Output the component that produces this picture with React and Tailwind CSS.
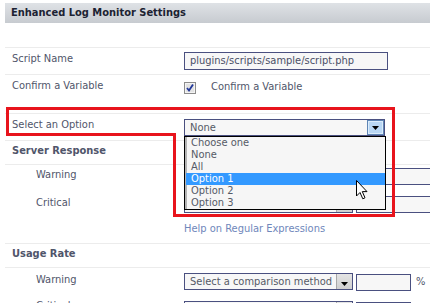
import React from "react";

function Arrow() {
  return (
    <svg width="7" height="4" viewBox="0 0 7 4" className="block">
      <path d="M0 0 H7 L3.5 4 Z" fill="#000" />
    </svg>
  );
}

function Select({ text, w = "w-[169px]", hover = false }) {
  return (
    <div className={`flex h-[17px] ${w} shrink-0 border border-[#4a5080] bg-[#f7f7f7]`}>
      <div className="flex-1 pl-[5px] leading-[15px] text-[#555a66] whitespace-nowrap overflow-hidden">{text}</div>
      {hover ? (
        <div className="flex h-full w-[17px] items-end justify-center border border-[#5f86b5] bg-[#b9d7f4] pb-[4px] shadow-[inset_0_0_0_1px_#dcecfb]">
          <Arrow />
        </div>
      ) : (
        <div className="flex h-full w-[16px] items-end justify-center border-l border-[#a8a8a8] bg-gradient-to-b from-[#e4e4e4] to-[#cfcfcf] pb-[3px]">
          <Arrow />
        </div>
      )}
    </div>
  );
}

function Input({ w }) {
  return <div className={`h-[17px] ${w} shrink-0 border border-[#4a5080] bg-[#f7f7f7]`} />;
}

export default function App() {
  const opts = ["Choose one", "None", "All", "Option 1", "Option 2", "Option 3"];
  return (
    <div className="relative h-[303px] w-[430px] overflow-hidden bg-white font-['DejaVu_Sans_Condensed','DejaVu_Sans',sans-serif] text-[11px] text-[#50556a]">
      <div className="ml-[5px] pt-[3px]">
        <div className="flex h-[20px] items-center bg-gradient-to-b from-[#dfe2e6] to-[#c7cbd0] pl-[6px] font-bold text-[#1c2232]">
          Enhanced Log Monitor Settings
        </div>
        <div className="h-[25px] border-b border-[#ececec]" />
        <div className="flex h-[27px] border-b border-[#ececec]">
          <div className="w-[179px] shrink-0 pl-[7px] pt-[3px] leading-[15px]">Script Name</div>
          <div className="pt-[4px]">
            <div className="h-[18px] w-[204px] border border-[#4a5080] bg-[#f7f7f7] pl-[5px] leading-[16px] text-[#4a4f66]">
              plugins/scripts/sample/script.php
            </div>
          </div>
        </div>
        <div className="flex h-[39px] border-b border-[#ececec]">
          <div className="w-[179px] shrink-0 pl-[7px] pt-[3px] leading-[15px]">Confirm a Variable</div>
          <div className="flex items-start pt-[7px]">
            <svg width="12" height="12" viewBox="0 0 12 12" className="block">
              <rect x="0.5" y="0.5" width="11" height="11" fill="#e3e3e3" stroke="#8c8c8c" />
              <rect x="1.5" y="1.5" width="9" height="9" fill="none" stroke="#f4f4f4" />
              <path d="M3 6 L5 8.5 L9 2.5" fill="none" stroke="#22389a" strokeWidth="1.8" />
            </svg>
            <span className="ml-[15px] -mt-[3px] leading-[15px]">Confirm a Variable</span>
          </div>
        </div>
        <div className="flex h-[27px] border-b border-[#ececec]">
          <div className="w-[179px] shrink-0 pl-[7px] pt-[3px] leading-[15px]">Select an Option</div>
          <div className="pt-[5px]">
            <Select text="None" w="w-[201px]" hover />
          </div>
        </div>
        <div className="flex h-[24px] border-b border-[#ececec] pl-[7px] pt-[2px] font-bold leading-[15px]">
          Server Response
        </div>
        <div className="border-b border-[#ececec]">
          <div className="flex h-[28px] pt-[3px]">
            <div className="w-[179px] shrink-0 pl-[31px] leading-[13px]">Warning</div>
            <Select text="Select a comparison method" />
            <div className="ml-[3px]"><Input w="w-[120px]" /></div>
          </div>
          <div className="flex h-[28px] pt-[3px]">
            <div className="w-[179px] shrink-0 pl-[31px] leading-[13px]">Critical</div>
            <Select text="Select a comparison method" />
            <div className="ml-[3px]"><Input w="w-[120px]" /></div>
          </div>
          <div className="h-[22px] pl-[179px] pt-[1px] leading-[13px] text-[#6f87bb]">Help on Regular Expressions</div>
        </div>
        <div className="flex h-[24px] border-b border-[#ececec] pl-[7px] pt-[2px] font-bold leading-[15px]">
          Usage Rate
        </div>
        <div className="flex h-[28px] pt-[5px]">
          <div className="w-[179px] shrink-0 pl-[31px] leading-[13px]">Warning</div>
          <Select text="Select a comparison method" />
          <div className="ml-[3px] pt-[1px]"><Input w="w-[55px]" /></div>
          <span className="ml-[5px] pt-[1px] leading-[15px]">%</span>
        </div>
        <div className="flex h-[28px] pt-[5px]">
          <div className="w-[179px] shrink-0 pl-[31px] leading-[13px] -mt-[2px]">Critical</div>
          <Select text="Select a comparison method" />
          <div className="ml-[3px] pt-[1px]"><Input w="w-[55px]" /></div>
        </div>
      </div>

      <div className="absolute left-[184px] top-[136px] w-[202px] border border-black bg-[#f6f6f6] shadow-[inset_2px_0_0_#b4b4b4]">
        {opts.map((o) => (
          <div
            key={o}
            className={`ml-[1px] h-[12px] pl-[5px] leading-[12px] ${o === "Option 1" ? "bg-[#3399ff] text-white" : "text-[#555a66]"}`}
          >
            {o}
          </div>
        ))}
      </div>

      <svg className="pointer-events-none absolute left-0 top-0" width="430" height="303">
        <path d="M7.5 108.5 H393.5 V215.5 H174.5 V134.5 H7.5 Z" fill="none" stroke="#e8141c" strokeWidth="3" />
      </svg>

      <svg className="pointer-events-none absolute left-[356px] top-[180px]" width="13" height="20" viewBox="0 0 13 20">
        <path d="M0.5 0.5 V16 L4 12.5 L6.8 18.8 L9 17.8 L6.3 11.6 H11 Z" fill="#fff" stroke="#000" strokeWidth="1" strokeLinejoin="round" />
      </svg>
    </div>
  );
}
